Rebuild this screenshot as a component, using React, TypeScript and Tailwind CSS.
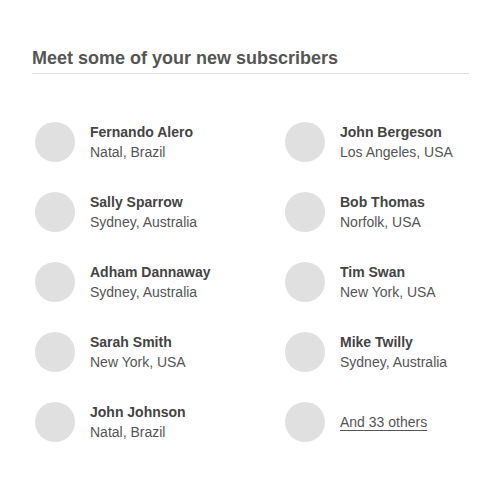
const people = [
  { name: "Fernando Alero", place: "Natal, Brazil" },
  { name: "John Bergeson", place: "Los Angeles, USA" },
  { name: "Sally Sparrow", place: "Sydney, Australia" },
  { name: "Bob Thomas", place: "Norfolk, USA" },
  { name: "Adham Dannaway", place: "Sydney, Australia" },
  { name: "Tim Swan", place: "New York, USA" },
  { name: "Sarah Smith", place: "New York, USA" },
  { name: "Mike Twilly", place: "Sydney, Australia" },
  { name: "John Johnson", place: "Natal, Brazil" },
];

export default function App() {
  return (
    <div className="h-[500px] w-[500px] overflow-hidden bg-white pl-8 pt-[46px] font-['Liberation_Sans',Arial,sans-serif]">
      <div className="w-[437px] border-b border-[#dcdcdc] pb-[3px]">
        <h2 className="text-[18px] font-bold leading-6 text-[#555]">Meet some of your new subscribers</h2>
      </div>

      <div className="mt-[48px] grid w-[437px] grid-cols-[250px_1fr] gap-y-[30px] pl-[3px]">
        {people.map((p) => (
          <div key={p.name} className="flex h-10 items-center gap-[15px]">
            <div className="h-10 w-10 shrink-0 rounded-full bg-[#e0e0e0]" />
            <div className="text-[14px] leading-5">
              <div className="font-bold text-[#444]">{p.name}</div>
              <div className="text-[#555]">{p.place}</div>
            </div>
          </div>
        ))}
        <div className="flex h-10 items-center gap-[15px]">
          <div className="h-10 w-10 shrink-0 rounded-full bg-[#e0e0e0]" />
          <a href="#" className="text-[14px] leading-5 text-[#555] underline underline-offset-[3px] decoration-[#555]">
            And 33 others
          </a>
        </div>
      </div>
    </div>
  );
}
